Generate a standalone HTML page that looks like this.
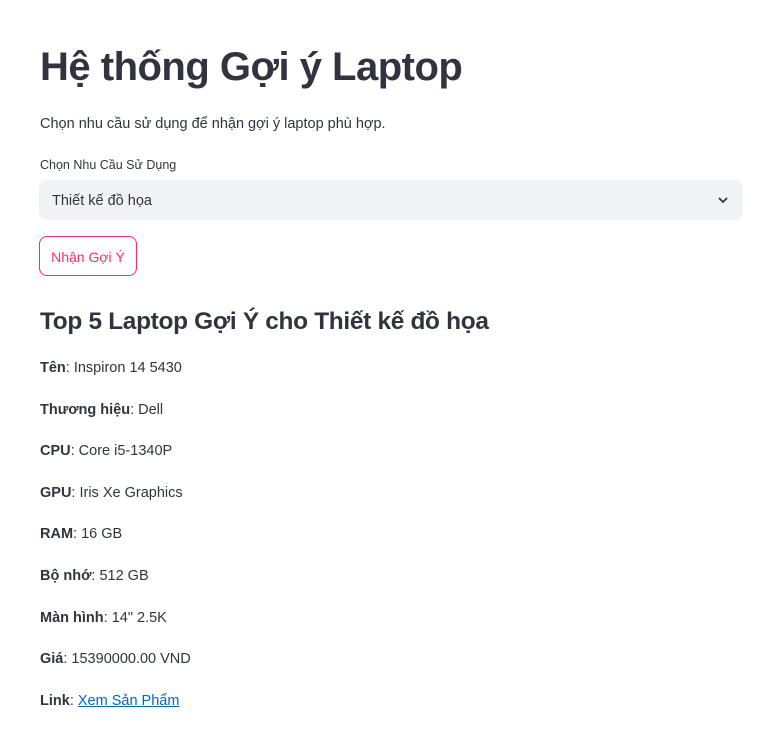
<!DOCTYPE html>
<html><head><meta charset="utf-8"><style>
*{margin:0;padding:0;box-sizing:border-box}
body{width:757px;height:752px;background:#fff;color:#31333f;font-family:"Liberation Sans",sans-serif;position:relative;overflow:hidden}
.a{position:absolute;white-space:nowrap}
h1{position:absolute;left:40px;top:45px;font-size:40px;font-weight:bold;letter-spacing:-0.5px;color:#31333f}
.sel{position:absolute;left:39px;top:180px;width:704px;height:40px;background:#f0f2f6;border-radius:8px}
.btn{position:absolute;left:39px;top:236px;width:98px;height:40px;border:1px solid #ff2b6b;border-radius:8px;color:#ff2b6b;font-size:14px;line-height:40px;text-align:center}
h2{position:absolute;left:40px;top:308px;font-size:24.4px;font-weight:bold;color:#31333f;letter-spacing:-0.3px}
.it{position:absolute;left:40px;font-size:14.5px}
a{color:#0068c9;text-decoration:underline}
</style></head><body>
<h1>Hệ thống Gợi ý Laptop</h1>
<div class="a" style="left:40px;top:116px;font-size:14.5px">Chọn nhu cầu sử dụng để nhận gợi ý laptop phù hợp.</div>
<div class="a" style="left:40px;top:158px;font-size:12.5px">Chọn Nhu Cầu Sử Dụng</div>
<div class="sel"><span class="a" style="left:13px;top:13px;font-size:14.5px">Thiết kế đồ họa</span>
<svg class="a" style="right:14px;top:14px" width="12" height="12" viewBox="0 0 12 12"><path d="M2 4l4 4 4-4" fill="none" stroke="#31333f" stroke-width="1.8"/></svg></div>
<div class="btn">Nhận Gợi Ý</div>
<h2>Top 5 Laptop Gợi Ý cho Thiết kế đồ họa</h2>
<div class="it" style="top:360px"><b>Tên</b>: Inspiron 14 5430</div>
<div class="it" style="top:402px"><b>Thương hiệu</b>: Dell</div>
<div class="it" style="top:443px"><b>CPU</b>: Core i5-1340P</div>
<div class="it" style="top:485px"><b>GPU</b>: Iris Xe Graphics</div>
<div class="it" style="top:526px"><b>RAM</b>: 16 GB</div>
<div class="it" style="top:568px"><b>Bộ nhớ</b>: 512 GB</div>
<div class="it" style="top:610px"><b>Màn hình</b>: 14" 2.5K</div>
<div class="it" style="top:651px"><b>Giá</b>: 15390000.00 VND</div>
<div class="it" style="top:693px"><b>Link</b>: <a>Xem Sản Phẩm</a></div>
</body></html>
